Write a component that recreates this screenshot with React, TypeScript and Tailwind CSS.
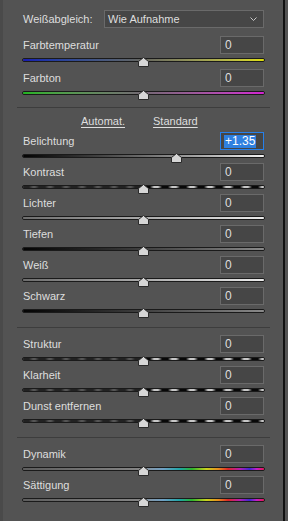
import clsx from "clsx";

type Track = "temp" | "tint" | "bw" | "lights" | "darks" | "contrast" | "vibrance";

const trackClass: Record<Track, string> = {
  temp: "bg-linear-to-r from-[#1a1ab0] via-[#66665e] to-[#dede00]",
  tint: "bg-linear-to-r from-[#1fb41f] via-[#736873] to-[#d21ed2]",
  bw: "bg-linear-to-r from-[#050505] to-[#f2f2f2]",
  lights: "bg-linear-to-r from-[#6e6e6e] to-[#ececec]",
  darks: "bg-linear-to-r from-[#050505] to-[#8a8a8a]",
  contrast: "",
  vibrance: "",
};

function TrackFill({ kind }: { kind: Track }) {
  if (kind === "contrast") {
    return (
      <div className="flex h-full w-full">
        <div className="h-full w-1/2 bg-[repeating-linear-gradient(90deg,#222_0px,#222_6px,#555_10px,#555_12px,#222_16px)]" />
        <div className="h-full w-1/2 bg-[repeating-linear-gradient(90deg,#080808_0px,#080808_6px,#c8c8c8_10px,#c8c8c8_14px,#080808_18px)]" />
      </div>
    );
  }
  if (kind === "vibrance") {
    return (
      <div className="flex h-full w-full">
        <div className="h-full w-1/2 bg-linear-to-r from-[#5e5e5e] to-[#868686]" />
        <div className="h-full w-1/2 bg-[linear-gradient(90deg,#8a929c,#6fa0c4_16%,#1ea6a6_30%,#2eb42e_40%,#c8d21e_52%,#e88c1e_62%,#dc2828_70%,#b41eb4_80%,#3c28d2_88%,#c81ec8_94%,#e61450)]" />
      </div>
    );
  }
  return <div className={clsx("h-full w-full", trackClass[kind])} />;
}

function Thumb({ pos }: { pos: number }) {
  return (
    <svg
      width="11"
      height="10"
      viewBox="0 0 11 10"
      className="absolute top-[3px]"
      style={{ left: `calc(${pos * 100}% - 5.5px)` }}
    >
      <polygon points="5.5,0.5 10.5,4.5 10.5,9.5 0.5,9.5 0.5,4.5" fill="#d6d6d6" stroke="#2a2a2a" strokeWidth="1" />
    </svg>
  );
}

function SliderRow({
  label,
  value,
  pos = 0.5,
  track,
  active = false,
}: {
  label: string;
  value: string;
  pos?: number;
  track: Track;
  active?: boolean;
}) {
  return (
    <div className="flex flex-col">
      <div className="flex h-[18px] items-center justify-between">
        <span className="pl-px">{label}</span>
        <div
          className={clsx(
            "mr-px flex h-[18px] w-[44px] items-center border bg-[#464646] pl-[3px] text-[12px]",
            active ? "border-[#2680eb]" : "border-[#6a6a6a]"
          )}
        >
          {active ? (
            <span className="bg-[#2f80e0] px-px leading-[13px] text-white">{value}</span>
          ) : (
            <span className="pl-px">{value}</span>
          )}
        </div>
      </div>
      <div className="relative h-[13px]">
        <div className="absolute left-0 right-0 top-[4px] h-[4px] overflow-hidden rounded-[2px] border border-[#1a1a1a]">
          <TrackFill kind={track} />
        </div>
        <Thumb pos={pos} />
      </div>
    </div>
  );
}

function Divider({ className }: { className?: string }) {
  return <div className={clsx("-ml-[5px] -mr-[5px] h-px bg-[#3d3d3d]", className)} />;
}

export default function App() {
  return (
    <div className="flex h-[521px] w-[288px] bg-[#535353] font-['Liberation_Sans',Arial,sans-serif] text-[11px] text-[#dedede]">
      <div className="w-[3px] bg-[#4a4a4a]" />
      <div className="flex w-[280px] flex-col pl-[19px] pr-[18px] pt-[10px]">
        {/* white balance */}
        <div className="flex h-[18px] items-center">
          <span className="w-[82px] pl-px">Weißabgleich:</span>
          <div className="mr-px flex h-[18px] flex-1 items-center justify-between border border-[#6a6a6a] bg-[#464646] pl-[3px] pr-[6px]">
            <span>Wie Aufnahme</span>
            <svg width="7" height="4" viewBox="0 0 7 4">
              <polyline points="0.5,0.5 3.5,3.5 6.5,0.5" fill="none" stroke="#c8c8c8" strokeWidth="1" />
            </svg>
          </div>
        </div>

        <div className="mt-[8px] flex flex-col gap-[2px]">
          <SliderRow label="Farbtemperatur" value="0" track="temp" />
          <SliderRow label="Farbton" value="0" track="tint" />
        </div>

        <Divider className="mt-[7px]" />

        <div className="flex h-[24px] items-center gap-[28px] pl-[59px] pt-[2px]">
          <span className="underline underline-offset-2">Automat.</span>
          <span className="underline underline-offset-2">Standard</span>
        </div>

        <div className="flex flex-col">
          <SliderRow label="Belichtung" value="+1.35" pos={0.635} track="bw" active />
          <SliderRow label="Kontrast" value="0" track="contrast" />
          <SliderRow label="Lichter" value="0" track="lights" />
          <SliderRow label="Tiefen" value="0" track="darks" />
          <SliderRow label="Weiß" value="0" track="lights" />
          <SliderRow label="Schwarz" value="0" track="darks" />
        </div>

        <Divider className="mt-[9px]" />

        <div className="mt-[7px] flex flex-col">
          <SliderRow label="Struktur" value="0" track="contrast" />
          <SliderRow label="Klarheit" value="0" track="contrast" />
          <SliderRow label="Dunst entfernen" value="0" track="contrast" />
        </div>

        <Divider className="mt-[9px]" />

        <div className="mt-[7px] flex flex-col">
          <SliderRow label="Dynamik" value="0" track="vibrance" />
          <SliderRow label="Sättigung" value="0" track="vibrance" />
        </div>
      </div>
      <div className="w-[2px] bg-[#111111]" />
      <div className="flex-1 bg-[#535353]" />
    </div>
  );
}
